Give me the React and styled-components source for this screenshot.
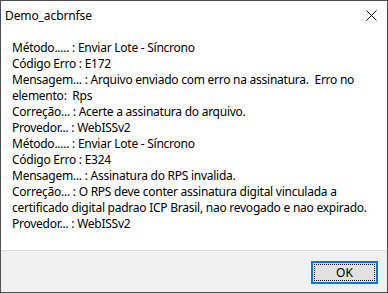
import React from 'react';
import styled, { createGlobalStyle } from 'styled-components';

const GlobalStyle = createGlobalStyle`
    html, body {
        margin: 0;
        padding: 0;
        background: #ffffff;
    }
    body {
        font-family: "Noto Sans", "Open Sans", sans-serif;
        font-size: 12px;
        color: #000000;
    }
`;

const Window = styled.div`
    box-sizing: border-box;
    width: 388px;
    height: 293px;
    border: 1px solid #4f4f4f;
    display: flex;
    flex-direction: column;
    background: #ffffff;
`;

const TitleBar = styled.div`
    height: 29px;
    display: flex;
    align-items: center;
    justify-content: space-between;
    padding: 0 10px 0 4px;
`;

const Title = styled.span`
    font-size: 12px;
    letter-spacing: -0.1px;
`;

const CloseButton = styled.div`
    width: 12px;
    height: 12px;
    display: flex;
    align-items: center;
    justify-content: center;
`;

const Body = styled.div`
    flex: 1;
    padding: 10px 11px 0 11px;
`;

const Line = styled.div`
    line-height: 16px;
    height: 16px;
    white-space: pre;
    letter-spacing: -0.25px;
`;

const Footer = styled.div`
    height: 41px;
    background: #f0f0f0;
    border-top: 1px solid #dfdfdf;
    display: flex;
    align-items: center;
    justify-content: flex-end;
    padding-right: 9px;
`;

const OkButton = styled.button`
    box-sizing: border-box;
    width: 67px;
    height: 23px;
    border: 2px solid #0078d7;
    background: #e1e1e1;
    font-family: "Noto Sans", "Open Sans", sans-serif;
    font-size: 12px;
    padding: 1px;
    margin-top: 1px;
    cursor: pointer;
`;

const FocusRect = styled.span`
    display: flex;
    align-items: center;
    justify-content: center;
    height: 100%;
    border: 1px dotted #000000;
    box-sizing: border-box;
`;

const lines = [
    'Método..... : Enviar Lote - Síncrono',
    'Código Erro : E172',
    'Mensagem... : Arquivo enviado com erro na assinatura.  Erro no',
    'elemento:  Rps',
    'Correção... : Acerte a assinatura do arquivo.',
    'Provedor... : WebISSv2',
    'Método..... : Enviar Lote - Síncrono',
    'Código Erro : E324',
    'Mensagem... : Assinatura do RPS invalida.',
    'Correção... : O RPS deve conter assinatura digital vinculada a',
    'certificado digital padrao ICP Brasil, nao revogado e nao expirado.',
    'Provedor... : WebISSv2',
];

const App = () => {
    return (
        <Window>
            <GlobalStyle />

            <TitleBar>
                <Title>Demo_acbrnfse</Title>
                <CloseButton>
                    <svg width="11" height="11" viewBox="0 0 11 11">
                        <path d="M0.5 0.5 L10.5 10.5 M10.5 0.5 L0.5 10.5" stroke="#000" strokeWidth="1" />
                    </svg>
                </CloseButton>
            </TitleBar>

            <Body>
                {lines.map((text, i) => (
                    <Line key={i}>{text}</Line>
                ))}
            </Body>

            <Footer>
                <OkButton>
                    <FocusRect>OK</FocusRect>
                </OkButton>
            </Footer>
        </Window>
    );
};

export default App;
